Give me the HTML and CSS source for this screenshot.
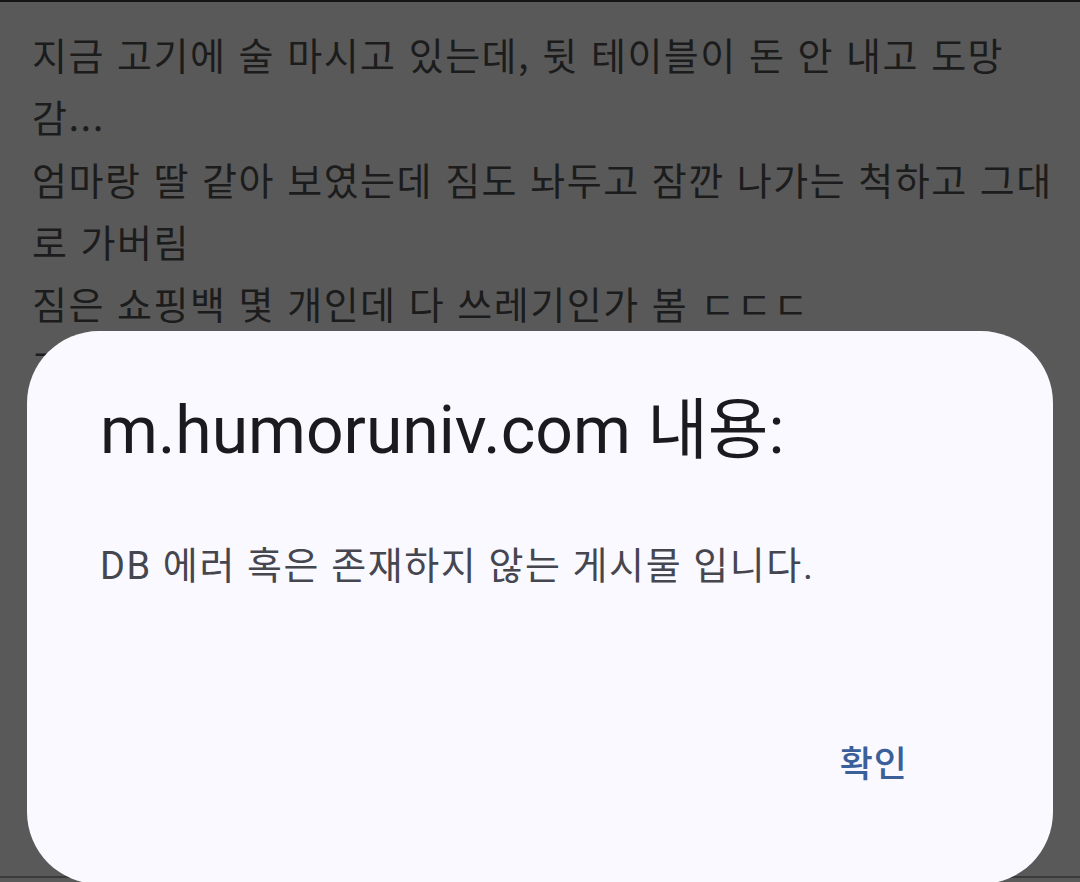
FILE: index.html
```html
<!DOCTYPE html>
<html lang="ko">
<head>
<meta charset="utf-8">
<link rel="stylesheet" href="styles.css">
</head>
<body>
<div class="page">
  <div class="topline"></div>
  <div class="article">
    <p>지금 고기에 술 마시고 있는데, 뒷 테이블이 돈 안 내고 도망 감...</p>
    <p>엄마랑 딸 같아 보였는데 짐도 놔두고 잠깐 나가는 척하고 그대로 가버림</p>
    <p>짐은 쇼핑백 몇 개인데 다 쓰레기인가 봄 ㄷㄷㄷ</p>
    <p>가게 사장님이 경찰에 신고하고 시시티비 확인하는 중이래</p>
  </div>
  <div class="bottomline"></div>
</div>
<div class="dialog">
  <h1 class="dialog-title">m.humoruniv.com 내용:</h1>
  <p class="dialog-message">DB 에러 혹은 존재하지 않는 게시물 입니다.</p>
  <div class="dialog-actions">
    <button class="dialog-button">확인</button>
  </div>
</div>
</body>
</html>
```
FILE: styles.css
```css
html, body {
  margin: 0;
  padding: 0;
  width: 1080px;
  height: 882px;
  overflow: hidden;
}
body {
  background: #595959;
  position: relative;
  font-family: "Noto Sans CJK KR", "Noto Sans", sans-serif;
}
.page {
  display: flex;
  flex-direction: column;
  height: 882px;
}
.topline {
  height: 2px;
  background: #141414;
  flex: none;
}
.article {
  flex: 1;
  padding: 21px 20px 0 32px;
  overflow: hidden;
}
.article p {
  margin: 0;
  font-size: 38px;
  letter-spacing: 1.5px;
  line-height: 62.3px;
  color: #1c1c1c;
}
.bottomline {
  height: 2px;
  background: #3a3a3a;
  margin-bottom: 4px;
  flex: none;
}
.dialog {
  position: absolute;
  left: 27px;
  top: 331px;
  width: 1026px;
  height: 553px;
  box-sizing: border-box;
  background: #f9f9ff;
  border-radius: 72px;
  padding: 68px 73px 0 73px;
  display: flex;
  flex-direction: column;
}
.dialog-title {
  margin: 0;
  font-family: Roboto, "Noto Sans CJK KR", sans-serif;
  font-weight: 400;
  font-size: 66px;
  line-height: 64px;
  color: #1b1b1f;
}
.dialog-message {
  margin: 85px 0 0 0;
  font-family: Roboto, "Noto Sans CJK KR", sans-serif;
  font-size: 38px;
  letter-spacing: 1.6px;
  line-height: 37px;
  color: #46464f;
}
.dialog-actions {
  display: flex;
  justify-content: flex-end;
  margin-top: 156px;
  padding-right: 72px;
}
.dialog-button {
  border: none;
  background: none;
  padding: 0;
  font-family: "Noto Sans CJK KR", sans-serif;
  font-size: 36px;
  letter-spacing: 1px;
  font-weight: 500;
  line-height: 40px;
  color: #3b5f99;
}
```
